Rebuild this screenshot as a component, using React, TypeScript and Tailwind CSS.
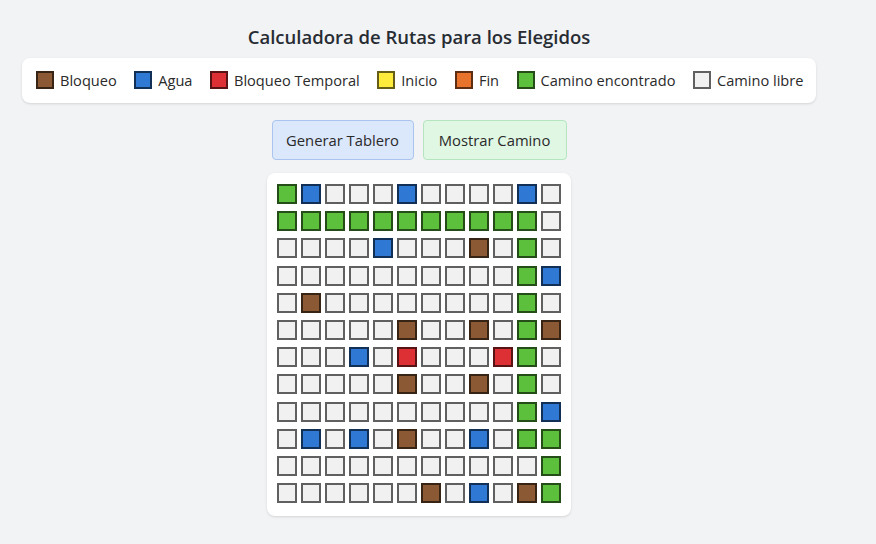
const COLORS: Record<string, string> = {
  Br: 'bg-[#8b5a34]',
  B: 'bg-[#2f78d4]',
  R: 'bg-[#dc3035]',
  Y: 'bg-[#ffeb3b]',
  O: 'bg-[#e8732c]',
  G: 'bg-[#5cc03c]',
  L: 'bg-[#f1f1f1]',
};

const legend = [
  { key: 'Br', label: 'Bloqueo' },
  { key: 'B', label: 'Agua' },
  { key: 'R', label: 'Bloqueo Temporal' },
  { key: 'Y', label: 'Inicio' },
  { key: 'O', label: 'Fin' },
  { key: 'G', label: 'Camino encontrado' },
  { key: 'L', label: 'Camino libre' },
];

const board = [
  'G B L L L B L L L L B L',
  'G G G G G G G G G G G L',
  'L L L L B L L L Br L G L',
  'L L L L L L L L L L G B',
  'L Br L L L L L L L L G L',
  'L L L L L Br L L Br L G Br',
  'L L L B L R L L L R G L',
  'L L L L L Br L L Br L G L',
  'L L L L L L L L L L G B',
  'L B L B L Br L L B L G G',
  'L L L L L L L L L L L G',
  'L L L L L L Br L B L Br G',
].map((row) => row.split(' '));

function Swatch({ kind }: { kind: string }) {
  return <span className={`inline-block shrink-0 w-[18px] h-[18px] border-2 border-black/60 ${COLORS[kind]}`} />;
}

export default function App() {
  return (
    <div className="min-h-screen bg-[#f2f3f5] text-[#2a2a2a] font-['Open_Sans','Noto_Sans',sans-serif]">
      <div className="w-[838px] flex flex-col items-center pt-[24px]">
        <h1 className="text-[18.5px] font-semibold leading-[26px] text-[#272c33]">
          Calculadora de Rutas para los Elegidos
        </h1>

        <div className="mt-[8px] w-[794px] bg-white rounded-lg shadow-sm flex items-center gap-[17.5px] px-[14px] h-[45px] text-[14.6px] whitespace-nowrap">
          {legend.map((item) => (
            <div key={item.key} className="flex items-center gap-[6px]">
              <Swatch kind={item.key} />
              <span>{item.label}</span>
            </div>
          ))}
        </div>

        <div className="mt-[17px] flex gap-[9px]">
          <button className="h-[40px] w-[142px] rounded border border-[#a9c5ef] bg-[#dbe7fb] text-[14.8px] text-[#2a2a2a]">
            Generar Tablero
          </button>
          <button className="h-[40px] w-[144px] rounded border border-[#b5e5be] bg-[#e0f7e4] text-[14.8px] text-[#2a2a2a]">
            Mostrar Camino
          </button>
        </div>

        <div className="mt-[13px] bg-white rounded-lg shadow-sm pt-[11px] px-[10px] pb-[13px]">
          <div className="grid grid-cols-12 gap-x-[4px] gap-y-[7.2px]">
            {board.flatMap((row, r) =>
              row.map((cell, c) => (
                <div key={`${r}-${c}`} className={`w-[20px] h-[20px] border-2 border-black/60 ${COLORS[cell]}`} />
              ))
            )}
          </div>
        </div>
      </div>
    </div>
  );
}
